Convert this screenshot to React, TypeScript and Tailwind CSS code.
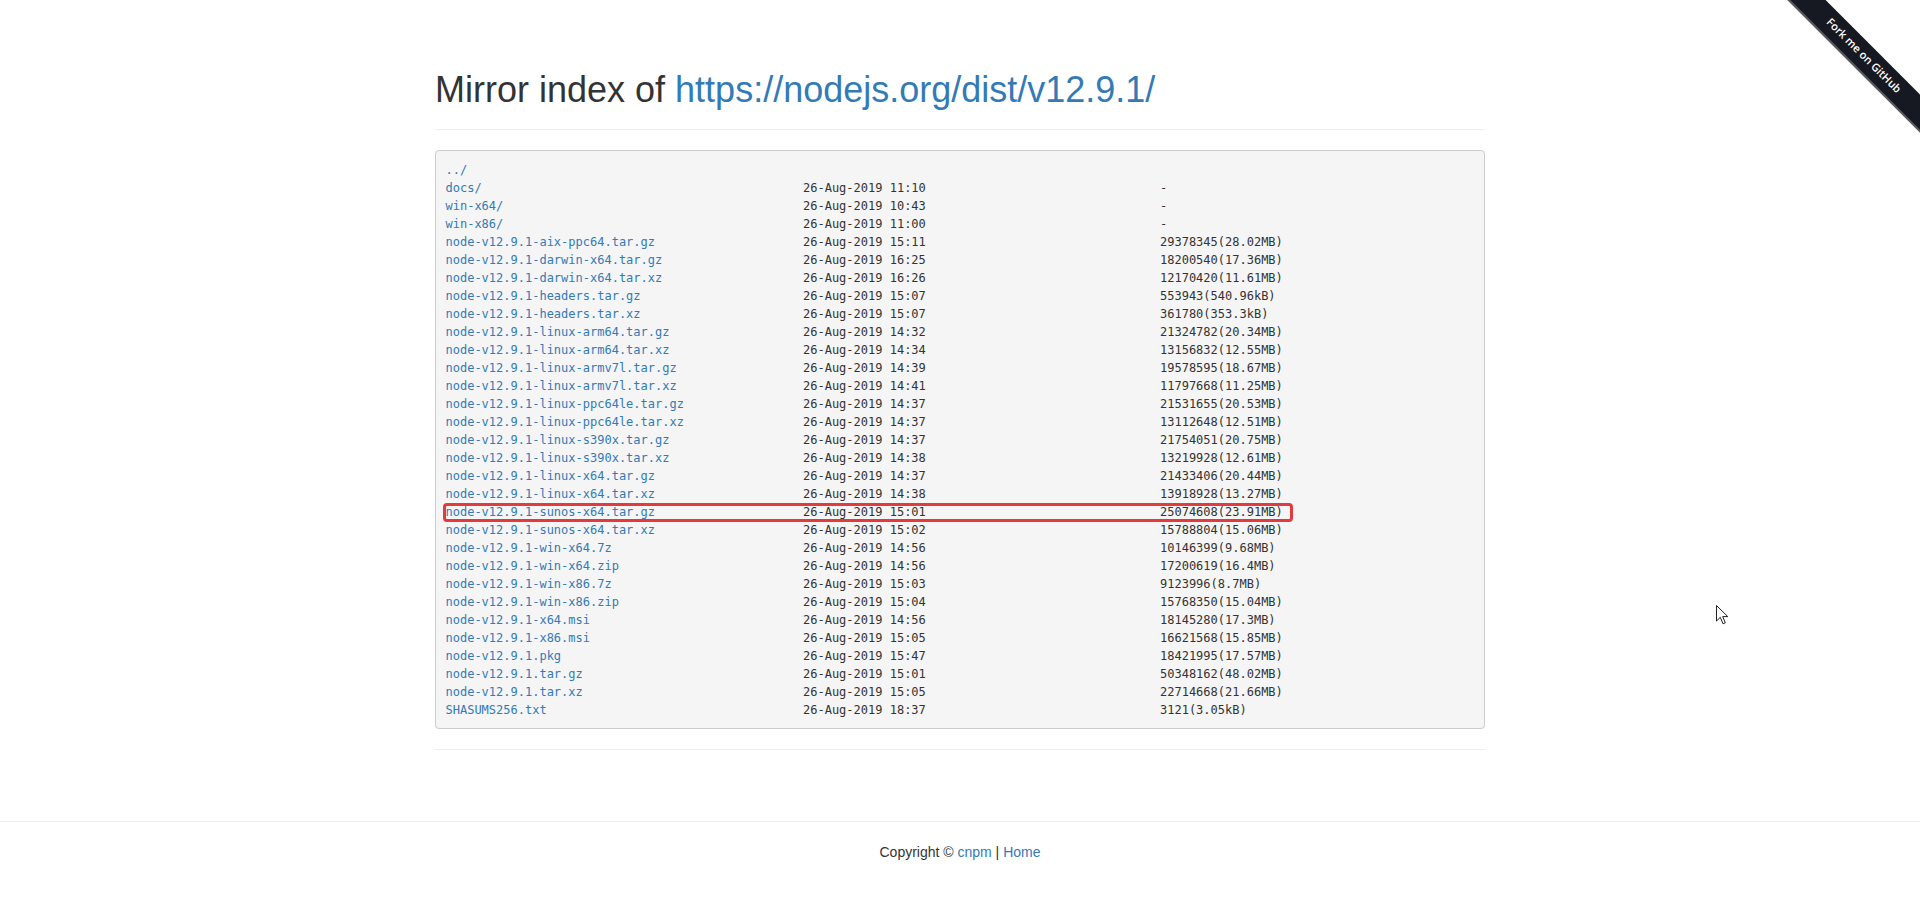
const rows: [string, string, string][] = [
  ["../", "", ""],
  ["docs/", "26-Aug-2019 11:10", "-"],
  ["win-x64/", "26-Aug-2019 10:43", "-"],
  ["win-x86/", "26-Aug-2019 11:00", "-"],
  ["node-v12.9.1-aix-ppc64.tar.gz", "26-Aug-2019 15:11", "29378345(28.02MB)"],
  ["node-v12.9.1-darwin-x64.tar.gz", "26-Aug-2019 16:25", "18200540(17.36MB)"],
  ["node-v12.9.1-darwin-x64.tar.xz", "26-Aug-2019 16:26", "12170420(11.61MB)"],
  ["node-v12.9.1-headers.tar.gz", "26-Aug-2019 15:07", "553943(540.96kB)"],
  ["node-v12.9.1-headers.tar.xz", "26-Aug-2019 15:07", "361780(353.3kB)"],
  ["node-v12.9.1-linux-arm64.tar.gz", "26-Aug-2019 14:32", "21324782(20.34MB)"],
  ["node-v12.9.1-linux-arm64.tar.xz", "26-Aug-2019 14:34", "13156832(12.55MB)"],
  ["node-v12.9.1-linux-armv7l.tar.gz", "26-Aug-2019 14:39", "19578595(18.67MB)"],
  ["node-v12.9.1-linux-armv7l.tar.xz", "26-Aug-2019 14:41", "11797668(11.25MB)"],
  ["node-v12.9.1-linux-ppc64le.tar.gz", "26-Aug-2019 14:37", "21531655(20.53MB)"],
  ["node-v12.9.1-linux-ppc64le.tar.xz", "26-Aug-2019 14:37", "13112648(12.51MB)"],
  ["node-v12.9.1-linux-s390x.tar.gz", "26-Aug-2019 14:37", "21754051(20.75MB)"],
  ["node-v12.9.1-linux-s390x.tar.xz", "26-Aug-2019 14:38", "13219928(12.61MB)"],
  ["node-v12.9.1-linux-x64.tar.gz", "26-Aug-2019 14:37", "21433406(20.44MB)"],
  ["node-v12.9.1-linux-x64.tar.xz", "26-Aug-2019 14:38", "13918928(13.27MB)"],
  ["node-v12.9.1-sunos-x64.tar.gz", "26-Aug-2019 15:01", "25074608(23.91MB)"],
  ["node-v12.9.1-sunos-x64.tar.xz", "26-Aug-2019 15:02", "15788804(15.06MB)"],
  ["node-v12.9.1-win-x64.7z", "26-Aug-2019 14:56", "10146399(9.68MB)"],
  ["node-v12.9.1-win-x64.zip", "26-Aug-2019 14:56", "17200619(16.4MB)"],
  ["node-v12.9.1-win-x86.7z", "26-Aug-2019 15:03", "9123996(8.7MB)"],
  ["node-v12.9.1-win-x86.zip", "26-Aug-2019 15:04", "15768350(15.04MB)"],
  ["node-v12.9.1-x64.msi", "26-Aug-2019 14:56", "18145280(17.3MB)"],
  ["node-v12.9.1-x86.msi", "26-Aug-2019 15:05", "16621568(15.85MB)"],
  ["node-v12.9.1.pkg", "26-Aug-2019 15:47", "18421995(17.57MB)"],
  ["node-v12.9.1.tar.gz", "26-Aug-2019 15:01", "50348162(48.02MB)"],
  ["node-v12.9.1.tar.xz", "26-Aug-2019 15:05", "22714668(21.66MB)"],
  ["SHASUMS256.txt", "26-Aug-2019 18:37", "3121(3.05kB)"],
];

function ForkRibbon() {
  return (
    <a
      href="#"
      className="absolute right-0 top-0 w-[140px] h-[140px] overflow-hidden"
      aria-label="Fork me on GitHub"
    >
      <div className="absolute left-[-17px] top-[43px] w-[200px] h-[27px] rotate-45 bg-[#161922] border-b-2 border-[#5a5c63] flex items-center justify-center text-white text-[11px] font-semibold font-['Open_Sans',sans-serif]">
        Fork me on GitHub
      </div>
    </a>
  );
}

function Cursor() {
  return (
    <svg
      className="absolute left-[1716px] top-[605px]"
      width="13"
      height="21"
      viewBox="0 0 13 21"
      aria-hidden="true"
    >
      <path
        d="M0.5 0.5 L0.5 16 L4.3 12.3 L7 18.8 L9.3 17.8 L6.7 11.6 L11.8 11.6 Z"
        fill="#fff"
        stroke="#222"
        strokeWidth="1"
        strokeLinejoin="round"
      />
    </svg>
  );
}

export default function App() {
  return (
    <div className="relative min-h-screen bg-white text-[#333] font-['Liberation_Sans',Arial,sans-serif]">
      <ForkRibbon />
      <div className="w-[1050px] mx-auto">
        <div className="pt-[70px] pb-[9px] mb-[20px] border-b border-[#eee]">
          <h1 className="text-[36px] leading-[1.1] font-medium mb-[10px]">
            Mirror index of{" "}
            <a href="#" className="text-[#337ab7]">
              https://nodejs.org/dist/v12.9.1/
            </a>
          </h1>
        </div>

        <pre className="border border-[#ccc] rounded bg-[#f5f5f5] px-[9.5px] pt-[10.5px] pb-[8.5px] text-[12px] leading-[18px] text-[#333] font-['DejaVu_Sans_Mono',monospace]">
          {rows.map(([name, date, size]) => (
            <div key={name} className="relative flex">
              {name === "node-v12.9.1-sunos-x64.tar.gz" && (
                <span className="absolute left-[-3px] top-[-0.5px] w-[850px] h-[19px] border-[3px] border-[#e53a3c] rounded-[4px]" />
              )}
              <span className="w-[357.5px] shrink-0">
                <a href="#" className="text-[#337ab7]">
                  {name}
                </a>
              </span>
              <span className="w-[357px] shrink-0">{date}</span>
              <span>{size}</span>
            </div>
          ))}
        </pre>

        <hr className="mt-[20px] border-t border-[#eee]" />
      </div>

      <footer className="mt-[71px] border-t border-[#eee] pt-[20px] pb-[20px] text-center text-[14px] leading-[20px]">
        Copyright © <a href="#" className="text-[#337ab7]">cnpm</a> |{" "}
        <a href="#" className="text-[#337ab7]">Home</a>
      </footer>

      <Cursor />
    </div>
  );
}
